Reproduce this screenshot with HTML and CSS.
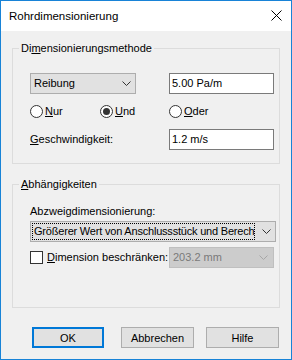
FILE: index.html
```html
<!DOCTYPE html>
<html lang="de">
<head>
  <meta charset="UTF-8" />
  <meta name="viewport" content="width=device-width, initial-scale=1.0"/>
  <title>Rohrdimensionierung</title>
  <link rel="stylesheet" href="styles.css">
</head>
<body>

  <div class="dialog">
    <div class="titlebar">
      <span class="title">Rohrdimensionierung</span>
      <svg class="close" width="11" height="11" viewBox="0 0 11 11">
        <path d="M0.5,0.5 L10.5,10.5 M10.5,0.5 L0.5,10.5" stroke="#000" stroke-width="1" fill="none" />
      </svg>
    </div>

    <div class="client">
      <fieldset class="group group-method">
        <legend>Di<u>m</u>ensionierungsmethode</legend>
        <div class="group-body">
          <div class="grid-row">
            <div class="combo combo-method">
              <span class="combo-text">Reibung</span>
              <svg class="chevron" width="9" height="5" viewBox="0 0 9 5">
                <polyline points="0.5,0.5 4.5,4.5 8.5,0.5" stroke="#333" fill="none" />
              </svg>
            </div>
            <div class="edit">5.00 Pa/m</div>
          </div>

          <div class="radio-row">
            <span class="radio"><span class="circle"></span><u>N</u>ur</span>
            <span class="radio"><span class="circle checked"></span><u>U</u>nd</span>
            <span class="radio"><span class="circle"></span><u>O</u>der</span>
          </div>

          <div class="grid-row">
            <span class="label"><u>G</u>eschwindigkeit:</span>
            <div class="edit">1.2 m/s</div>
          </div>
        </div>
      </fieldset>

      <fieldset class="group group-deps">
        <legend><u>A</u>bhängigkeiten</legend>
        <div class="group-body">
          <div class="label">Abzweigdimensionierung:</div>
          <div class="combo combo-branch">
            <span class="focus-rect"><span class="combo-text">Größerer Wert von Anschlussstück und Berechnung</span></span>
            <svg class="chevron" width="9" height="5" viewBox="0 0 9 5">
              <polyline points="0.5,0.5 4.5,4.5 8.5,0.5" stroke="#333" fill="none" />
            </svg>
          </div>

          <div class="grid-row limit-row">
            <span class="check"><span class="box"></span><u>D</u>imension beschränken:</span>
            <div class="combo combo-disabled">
              <span class="combo-text">203.2 mm</span>
              <svg class="chevron" width="9" height="5" viewBox="0 0 9 5">
                <polyline points="0.5,0.5 4.5,4.5 8.5,0.5" stroke="#a6a6a6" fill="none" />
              </svg>
            </div>
          </div>
        </div>
      </fieldset>

      <div class="buttons">
        <button class="btn btn-ok">OK</button>
        <button class="btn btn-cancel">Abbrechen</button>
        <button class="btn btn-help">Hilfe</button>
      </div>
    </div>
  </div>

</body>
</html>
```

FILE: styles.css
```css
html, body {
  margin: 0;
  padding: 0;
  background: #f0f0f0;
  font-family: "Liberation Sans", Arial, sans-serif;
  font-size: 11px;
  line-height: 13px;
  color: #000;
}
u {
  text-decoration: underline;
  text-underline-offset: 1px;
}
.dialog {
  width: 292px;
  height: 360px;
  box-sizing: border-box;
  border: 1px solid #1883d7;
  background: #f0f0f0;
  display: flex;
  flex-direction: column;
}
.titlebar {
  height: 30px;
  background: #fff;
  display: flex;
  align-items: center;
  justify-content: space-between;
  padding: 0 9px 0 8px;
  flex-shrink: 0;
}
.title {
  font-size: 11.5px;
  line-height: 14px;
  margin-top: -1px;
}
.close {
  display: block;
  margin-top: -1px;
}
.client {
  padding: 11px 11px 0 11px;
}

/* group boxes */
.group {
  margin: 0;
  padding: 0;
  border: 1px solid #dcdcdc;
  min-width: 0;
}
.group legend {
  margin-left: 6px;
  padding: 0 2px;
  line-height: 13px;
}
.group-method .group-body {
  padding: 18px 6px 13px 17px;
  display: flex;
  flex-direction: column;
  gap: 11px;
}
.group-deps {
  margin-top: 14px;
}
.group-deps .group-body {
  padding: 14px 4px 39px 17px;
}

.grid-row {
  display: grid;
  grid-template-columns: 139px 105px;
  align-items: center;
}
.label {
  white-space: nowrap;
}

/* combo boxes */
.combo {
  height: 21px;
  box-sizing: border-box;
  border: 1px solid #adadad;
  background: #e1e1e1;
  display: flex;
  align-items: center;
  justify-content: space-between;
  padding: 0 4px 0 3px;
  overflow: hidden;
}
.combo-text {
  white-space: nowrap;
  line-height: 19px;
}
.chevron {
  display: block;
  flex-shrink: 0;
}
.combo-method {
  width: 106px;
}
.combo-branch {
  width: 246px;
  margin-top: 3px;
  padding: 0 4px 0 1px;
}
.focus-rect {
  display: block;
  width: 223px;
  height: 17px;
  box-sizing: border-box;
  border: 1px dotted #000;
  padding-left: 1px;
  overflow: hidden;
}
.focus-rect .combo-text {
  line-height: 15px;
  letter-spacing: -0.2px;
}
.combo-disabled {
  width: 105px;
  border-color: #bfbfbf;
  background: #cccccc;
  color: #7a7a7a;
  padding-right: 5px;
}

/* edits */
.edit {
  height: 21px;
  box-sizing: border-box;
  border: 1px solid #7a7a7a;
  background: #fff;
  padding: 0 2px;
  line-height: 19px;
  white-space: nowrap;
}

/* radios and check */
.radio-row {
  display: grid;
  grid-template-columns: 70px 69px 105px;
  align-items: center;
  height: 13px;
}
.radio, .check {
  display: flex;
  align-items: center;
  white-space: nowrap;
}
.circle {
  width: 13px;
  height: 13px;
  box-sizing: border-box;
  border: 1px solid #333;
  border-radius: 50%;
  background: #fff;
  margin-right: 2px;
  display: flex;
  align-items: center;
  justify-content: center;
}
.circle.checked::after {
  content: "";
  width: 7px;
  height: 7px;
  border-radius: 50%;
  background: #333;
}
.limit-row {
  margin-top: 5px;
}
.box {
  width: 13px;
  height: 13px;
  box-sizing: border-box;
  border: 1px solid #333;
  background: #fff;
  margin-right: 4px;
}

/* buttons */
.buttons {
  display: flex;
  margin-top: 19px;
}
.btn {
  height: 21px;
  width: 73px;
  box-sizing: border-box;
  border: 1px solid #adadad;
  background: #e1e1e1;
  font-family: inherit;
  font-size: 11px;
  color: #000;
  padding: 0;
  margin: 0;
}
.btn-ok {
  width: 72px;
  border: 2px solid #0078d7;
  margin-left: 20px;
}
.btn-cancel {
  margin-left: 17px;
}
.btn-help {
  margin-left: 12px;
}
```
